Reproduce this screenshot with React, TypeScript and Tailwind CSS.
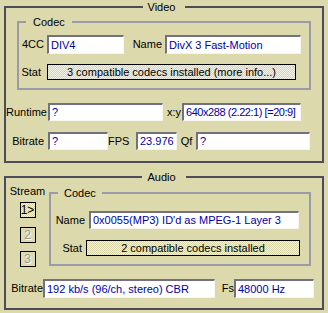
import React from "react";

// GSpot-style codec info panel (Video / Audio)

const dither =
  "bg-[image:repeating-conic-gradient(#f6f5ea_0_25%,#d6d3a6_0_50%)] bg-[length:2px_2px]";

function Edit({
  value,
  w,
  h = "h-[18px]",
  extra = "",
}: {
  value: string;
  w: string;
  h?: string;
  extra?: string;
}) {
  return (
    <div
      className={`${w} ${h} ${extra} flex items-center overflow-hidden whitespace-nowrap border-t-2 border-l-2 border-r border-b border-t-[#72727e] border-l-[#72727e] border-r-[#f7f6ee] border-b-[#f7f6ee] bg-white pl-[2px] text-[#0000a6]`}
    >
      {value}
    </div>
  );
}

function Stat({ text, w }: { text: string; w: string }) {
  return (
    <div className={`${w} flex h-[16px] items-center justify-center whitespace-nowrap border border-black ${dither}`}>
      {text}
    </div>
  );
}

function Label({ text, w, pr = "pr-[3px]" }: { text: string; w: string; pr?: string }) {
  return <div className={`${w} ${pr} shrink-0 whitespace-nowrap text-right`}>{text}</div>;
}

function StreamBtn({ n, active, mt }: { n: string; active?: boolean; mt: string }) {
  return (
    <div
      className={`${mt} mx-auto flex h-[16px] w-[16px] items-center justify-center border border-black text-[12px] leading-none ${
        active ? dither + " text-black" : "bg-[#dedbb2] text-[#98988e] [text-shadow:1px_1px_0_#ffffff]"
      }`}
    >
      {n}
    </div>
  );
}

export default function App() {
  return (
    <div className="h-[313px] w-[328px] bg-[#dcd9ac] px-[4px] font-['Liberation_Sans',Arial,sans-serif] text-[11px] text-black">
      {/* Video */}
      <fieldset className="h-[163px] border-2 border-[#4c4c5a]">
        <legend className="mx-auto h-[14px] pl-[5px] pr-[10px] leading-[14px]">Video</legend>

        <fieldset className="ml-[11px] mt-[1px] h-[75px] w-[294px] border-2 border-[#9a9aab]">
          <legend className="ml-[7px] h-[14px] px-[7px] leading-[14px]">Codec</legend>
          <div className="mt-[6px] flex items-center">
            <Label text="4CC" w="w-[28px]" />
            <Edit value="DIV4" w="w-[77px]" h="h-[19px]" />
            <Label text="Name" w="w-[41px]" />
            <Edit value="DivX 3 Fast-Motion" w="w-[136px]" h="h-[19px]" />
          </div>
          <div className="mt-[10px] flex items-center">
            <Label text="Stat" w="w-[28px]" pr="pr-[6px]" />
            <Stat text="3 compatible codecs installed (more info...)" w="w-[249px]" />
          </div>
        </fieldset>

        <div className="mt-[13px] flex items-center">
          <Label text="Runtime" w="w-[42px]" pr="pr-[1px]" />
          <Edit value="?" w="w-[115px]" />
          <Label text="x:y" w="w-[19px]" pr="pr-[1px]" />
          <Edit value="640x288 (2.22:1) [=20:9]" w="w-[119px]" extra="tracking-[-0.45px]" />
        </div>
        <div className="mt-[11px] flex items-center">
          <Label text="Bitrate" w="w-[42px]" pr="pr-[4px]" />
          <Edit value="?" w="w-[60px]" />
          <Label text="FPS" w="w-[28px]" pr="pr-[7px]" />
          <Edit value="23.976" w="w-[41px]" />
          <div className="w-[19px] text-center">Qf</div>
          <Edit value="?" w="w-[114px]" />
        </div>
      </fieldset>

      {/* Audio */}
      <fieldset className="mt-[7px] h-[140px] border-2 border-[#4c4c5a]">
        <legend className="mx-auto h-[14px] pl-[5px] pr-[10px] leading-[14px]">Audio</legend>

        <div className="flex items-start">
          <div className="w-[43px]">
            <div className="mt-[1px] h-[13px] text-center leading-[13px]">Stream</div>
            <StreamBtn n="1>" active mt="mt-[4px]" />
            <StreamBtn n="2" mt="mt-[9px]" />
            <StreamBtn n="3" mt="mt-[8px]" />
          </div>

          <fieldset className="mt-[2px] h-[80px] w-[262px] border-2 border-[#9a9aab]">
            <legend className="ml-[7px] h-[14px] px-[6px] leading-[14px]">Codec</legend>
            <div className="mt-[11px] flex items-center">
              <Label text="Name" w="w-[38px]" pr="pr-[4px]" />
              <Edit value="0x0055(MP3) ID'd as MPEG-1 Layer 3" w="w-[210px]" />
            </div>
            <div className="mt-[11px] flex items-center">
              <Label text="Stat" w="w-[35px]" pr="pr-[4px]" />
              <Stat text="2 compatible codecs installed" w="w-[214px]" />
            </div>
          </fieldset>
        </div>

        <div className="mt-[12px] flex items-center">
          <Label text="Bitrate" w="w-[37px]" pr="pr-0" />
          <Edit value="192 kb/s (96/ch, stereo) CBR" w="w-[172px]" h="h-[19px]" />
          <Label text="Fs" w="w-[19px]" pr="pr-0" />
          <Edit value="48000 Hz" w="w-[80px]" h="h-[19px]" />
        </div>
      </fieldset>
    </div>
  );
}
